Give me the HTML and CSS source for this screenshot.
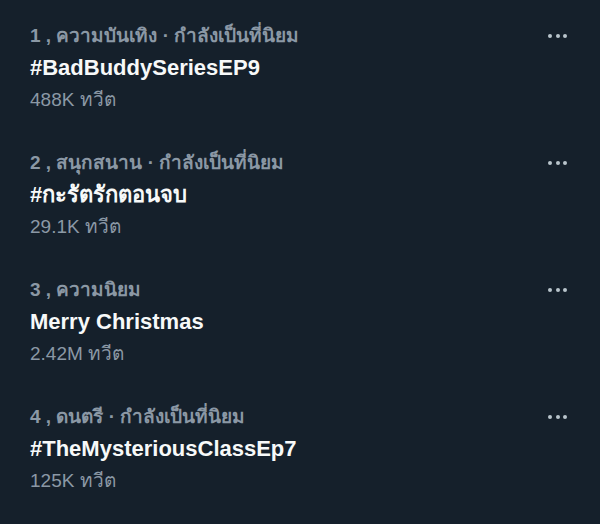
FILE: index.html
```html
<!DOCTYPE html>
<html lang="th">
<head>
<meta charset="utf-8">
<link rel="stylesheet" href="styles.css">
</head>
<body>
<div class="list">
  <div class="trend">
    <div class="info">
      <div class="meta">1 , ความบันเทิง · กำลังเป็นที่นิยม</div>
      <div class="title">#BadBuddySeriesEP9</div>
      <div class="count">488K ทวีต</div>
    </div>
    <div class="more"><span></span><span></span><span></span></div>
  </div>
  <div class="trend">
    <div class="info">
      <div class="meta">2 , สนุกสนาน · กำลังเป็นที่นิยม</div>
      <div class="title">#กะรัตรักตอนจบ</div>
      <div class="count">29.1K ทวีต</div>
    </div>
    <div class="more"><span></span><span></span><span></span></div>
  </div>
  <div class="trend">
    <div class="info">
      <div class="meta">3 , ความนิยม</div>
      <div class="title">Merry Christmas</div>
      <div class="count">2.42M ทวีต</div>
    </div>
    <div class="more"><span></span><span></span><span></span></div>
  </div>
  <div class="trend">
    <div class="info">
      <div class="meta">4 , ดนตรี · กำลังเป็นที่นิยม</div>
      <div class="title">#TheMysteriousClassEp7</div>
      <div class="count">125K ทวีต</div>
    </div>
    <div class="more"><span></span><span></span><span></span></div>
  </div>
</div>
</body>
</html>
```

FILE: styles.css
```css
html, body {
  margin: 0;
  padding: 0;
  background: #15202b;
}
body {
  width: 600px;
  height: 524px;
  overflow: hidden;
  font-family: "Liberation Sans", "Noto Sans", sans-serif;
}
.list {
  padding-top: 4px;
}
.trend {
  display: flex;
  justify-content: space-between;
  align-items: flex-start;
  padding: 16px 0 15px 30px;
}
.meta, .title, .count {
  height: 32px;
  line-height: 32px;
  white-space: nowrap;
}
.meta {
  color: #8b98a5;
  font-size: 19px;
  font-weight: 700;
}
.title {
  color: #f7f9f9;
  font-size: 22px;
  font-weight: 700;
}
.count {
  color: #8b98a5;
  font-size: 19px;
}
.more {
  display: flex;
  gap: 3.5px;
  margin-top: 14px;
  margin-right: 33px;
}
.more span {
  width: 4px;
  height: 4px;
  border-radius: 50%;
  background: #b9c4cc;
}
```
